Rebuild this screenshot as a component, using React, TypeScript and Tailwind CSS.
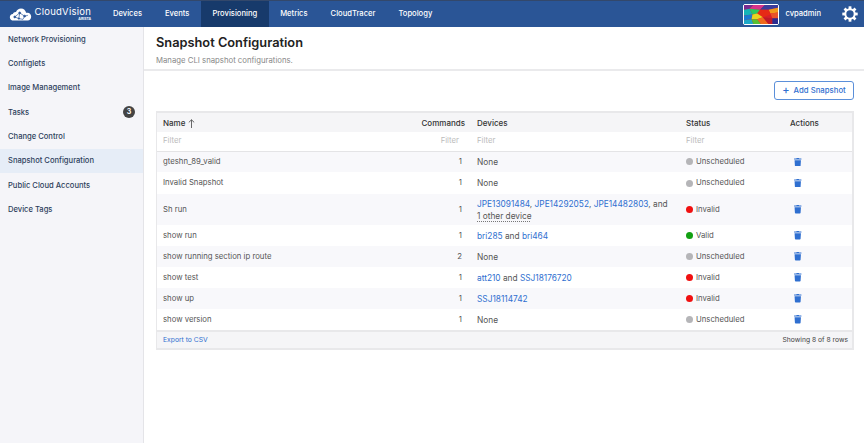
import React from "react";
import { FaTrash } from "react-icons/fa";

const nav = ["Devices", "Events", "Provisioning", "Metrics", "CloudTracer", "Topology"];
const side = ["Network Provisioning", "Configlets", "Image Management", "Tasks", "Change Control", "Snapshot Configuration", "Public Cloud Accounts", "Device Tags"];

function L({ children }: { children: React.ReactNode }) {
  return <span className="text-[#2f6fd0]">{children}</span>;
}

type Row = { name: string; cmd: number; dev: React.ReactNode; status: string; h: string };
const rows: Row[] = [
  { name: "gteshn_89_valid", cmd: 1, dev: "None", status: "U", h: "h-[21px]" },
  { name: "Invalid Snapshot", cmd: 1, dev: "None", status: "U", h: "h-[22px]" },
  {
    name: "Sh run", cmd: 1, status: "I", h: "h-[31px]",
    dev: (
      <>
        <L>JPE13091484</L>, <L>JPE14292052</L>, <L>JPE14482803</L>, and
        <br />
        <span className="underline decoration-dotted decoration-[#777] underline-offset-2">1 other device</span>
      </>
    ),
  },
  { name: "show run", cmd: 1, dev: <><L>bri285</L> and <L>bri464</L></>, status: "V", h: "h-[21px]" },
  { name: "show running section ip route", cmd: 2, dev: "None", status: "U", h: "h-[21px]" },
  { name: "show test", cmd: 1, dev: <><L>att210</L> and <L>SSJ18176720</L></>, status: "I", h: "h-[21px]" },
  { name: "show up", cmd: 1, dev: <L>SSJ18114742</L>, status: "I", h: "h-[21px]" },
  { name: "show version", cmd: 1, dev: "None", status: "U", h: "h-[21px]" },
];

function Status({ s }: { s: string }) {
  const label = s === "U" ? "Unscheduled" : s === "I" ? "Invalid" : "Valid";
  const color = s === "U" ? "bg-[#b5b5b8]" : s === "I" ? "bg-[#f01010]" : "bg-[#12a012]";
  return (
    <span className="flex items-center gap-[3px]">
      <span className={`w-[7px] h-[7px] rounded-full ${color}`} />
      {label}
    </span>
  );
}

function Logo() {
  return (
    <svg width="23" height="13" viewBox="0 0 28 16" preserveAspectRatio="none">
      <path d="M6 15.5C2.8 15.5 1 13.6 1 11.3 1 9.2 2.6 7.6 4.7 7.4 5.2 5.7 6.7 4.6 8.5 4.8 9.6 2.2 11.9.5 14.6.5c3.3 0 5.8 2.3 6.2 5.4 .6-.2 1-.2 1.6-.2 3 0 4.6 2.2 4.6 4.9 0 2.8-1.3 4.9-4.4 4.9z" fill="#fff" />
      <g stroke="#2a5596" strokeWidth="0.8" fill="#2a5596">
        <path d="M7 11L13 6L19 10L23 9M13 6L12 13M19 10L17 14M7 11L12 13L17 14" fill="none" />
        <circle cx="7" cy="11" r="1.2" />
        <circle cx="13" cy="6" r="1.2" />
        <circle cx="19" cy="10" r="1.2" />
        <circle cx="12" cy="13" r="0.9" />
      </g>
    </svg>
  );
}

function Avatar() {
  return (
    <svg width="34" height="19" viewBox="0 0 36 20" preserveAspectRatio="none" className="block">
      <rect width="36" height="20" fill="#d8202a" />
      <polygon points="0,0 10,0 6,4 0,5" fill="#7a2a90" />
      <polygon points="10,0 22,0 17,5 6,4" fill="#d8348a" />
      <polygon points="22,0 36,0 36,3 26,5 17,5" fill="#3c3c9c" />
      <polygon points="26,5 36,3 36,8 28,9" fill="#f09a1c" />
      <polygon points="0,5 6,4 9,10 0,11" fill="#14b4b8" />
      <polygon points="6,4 17,5 14,9 9,10" fill="#2cc860" />
      <polygon points="17,5 26,5 28,10 20,13 14,9" fill="#e62a16" />
      <polygon points="28,9 36,8 36,14 30,14" fill="#e8542a" />
      <polygon points="0,11 9,10 8,15 0,16" fill="#1a7ad0" />
      <polygon points="9,10 14,9 20,13 14,15 8,15" fill="#e8d420" />
      <polygon points="0,16 8,15 10,20 0,20" fill="#1ca8c8" />
      <polygon points="8,15 14,15 18,20 10,20" fill="#58c030" />
      <polygon points="14,15 20,13 26,20 18,20" fill="#f06a1c" />
      <polygon points="20,13 30,14 30,20 26,20" fill="#c01a2a" />
      <polygon points="30,14 36,14 36,20 30,20" fill="#2a2c90" />
    </svg>
  );
}

function Gear() {
  const teeth = Array.from({ length: 8 }, (_, i) => i * 45);
  return (
    <svg width="16" height="16" viewBox="0 0 16 16">
      {teeth.map((a) => (
        <rect key={a} x="6.6" y="0.3" width="2.8" height="3" fill="#fff" transform={`rotate(${a} 8 8)`} />
      ))}
      <circle cx="8" cy="8" r="4.7" fill="none" stroke="#fff" strokeWidth="2" />
    </svg>
  );
}

export default function App() {
  return (
    <div className="w-[864px] h-[443px] overflow-hidden bg-white flex flex-col font-['Inter','Liberation_Sans',sans-serif] text-[7.75px] text-[#555]">
      <header className="h-[27px] shrink-0 bg-[#2a5596] border-t border-[#33486b] flex items-stretch text-white text-[7.6px] font-medium">
        <div className="w-[101.5px] flex items-center pl-[8.5px] gap-[3px]">
          <Logo />
          <div className="flex flex-col items-end leading-none">
            <span className="text-[9.5px] font-normal tracking-[0.25px]">CloudVision</span>
            <span className="text-[3.5px] font-bold mt-[1px]">ARISTA</span>
          </div>
        </div>
        <nav className="flex items-stretch">
          {nav.map((n) => (
            <div key={n} className={`flex items-center px-[11.5px] ${n === "Provisioning" ? "bg-[#173a6b]" : ""}`}>
              {n}
            </div>
          ))}
        </nav>
        <div className="ml-auto flex items-center pr-[6px]">
          <div className="border-[1.5px] border-white rounded-[2px] bg-white mr-[6px]">
            <Avatar />
          </div>
          <span className="mr-[21px]">cvpadmin</span>
          <Gear />
        </div>
      </header>
      <div className="flex flex-1 min-h-0">
        <aside className="w-[144px] shrink-0 bg-[#f5f5f9] border-r border-[#e4e4e8] text-[#2e3f5c] text-[7.6px] font-medium">
          {side.map((s) => (
            <div key={s} className={`h-[24.4px] flex items-center justify-between pl-[8px] pr-[8px] ${s === "Snapshot Configuration" ? "bg-[#e6edf7]" : ""}`}>
              <span>{s}</span>
              {s === "Tasks" && (
                <span className="w-[12px] h-[12px] rounded-full bg-[#444] text-white text-[7px] font-bold flex items-center justify-center">3</span>
              )}
            </div>
          ))}
        </aside>
        <main className="flex-1 min-w-0 flex flex-col">
          <div className="h-[44px] shrink-0 border-b-2 border-[#eaeaec] pl-[12px] pt-[7px]">
            <div className="text-[12.8px] font-semibold text-[#222] leading-[18px]">Snapshot Configuration</div>
            <div className="text-[#888] text-[7.75px] leading-[12px] mt-[2px]">Manage CLI snapshot configurations.</div>
          </div>
          <div className="pr-[10px] pl-[12px] pt-[10px]">
            <div className="flex justify-end mb-[11px]">
              <button className="h-[19px] w-[80px] border border-[#5b8fd9] rounded-[3px] text-[#2f6fd0] flex items-center justify-center gap-[4px] font-medium">
                <span className="text-[11px] leading-none">+</span> Add Snapshot
              </button>
            </div>
            <div className="border-2 border-[#e8e8ea] border-l w-[698px]">
              <table className="w-full table-fixed border-collapse">
                <colgroup>
                  <col className="w-[210px]" />
                  <col className="w-[104px]" />
                  <col className="w-[209px]" />
                  <col className="w-[104px]" />
                  <col />
                </colgroup>
                <thead>
                  <tr className="h-[19px] bg-[#f5f5f7] text-[#333] text-[8px]">
                    <th className="font-medium text-left px-[6px] pt-[1px]">
                      <span className="inline-flex items-center gap-[3px]">
                        Name
                        <svg width="7" height="9" viewBox="0 0 7 9" fill="none" stroke="#444" strokeWidth="0.8">
                          <path d="M3.5 9V0.8M0.8 3.4L3.5 0.8L6.2 3.4" />
                        </svg>
                      </span>
                    </th>
                    <th className="font-medium text-right px-[6px] pt-[1px]">Commands</th>
                    <th className="font-medium text-left px-[6px] pt-[1px]">Devices</th>
                    <th className="font-medium text-left px-[6px] pt-[1px]">Status</th>
                    <th className="font-medium text-left px-[6px] pt-[1px]">Actions</th>
                  </tr>
                  <tr className="h-[19px] bg-white text-[#bbb] border-b border-[#e4e4e6]">
                    <td className="px-[6px]">Filter</td>
                    <td className="px-[6px] pr-[12px] text-right">Filter</td>
                    <td className="px-[6px]">Filter</td>
                    <td className="px-[6px]">Filter</td>
                    <td />
                  </tr>
                </thead>
                <tbody>
                  {rows.map((r, i) => (
                    <tr key={r.name} className={`${r.h} ${i % 2 === 0 ? "bg-[#f8f8fb]" : "bg-white"}`}>
                      <td className="px-[6px]">{r.name}</td>
                      <td className="px-[6px] pr-[9px] text-right">{r.cmd}</td>
                      <td className="px-[6px] text-[8.3px] leading-[12px]">{r.dev}</td>
                      <td className="px-[6px]"><Status s={r.status} /></td>
                      <td className="px-[6px] pl-[10px]"><FaTrash className="text-[#2f6fd0] w-[7.5px] h-[8.5px]" /></td>
                    </tr>
                  ))}
                </tbody>
              </table>
              <div className="h-[18px] bg-[#f5f5f7] border-t-2 border-[#e8e8ea] flex items-center justify-between pl-[6px] pr-[4px] text-[6.75px]">
                <span className="text-[#2f6fd0]">Export to CSV</span>
                <span className="text-[#444]">Showing 8 of 8 rows</span>
              </div>
            </div>
          </div>
        </main>
      </div>
    </div>
  );
}
